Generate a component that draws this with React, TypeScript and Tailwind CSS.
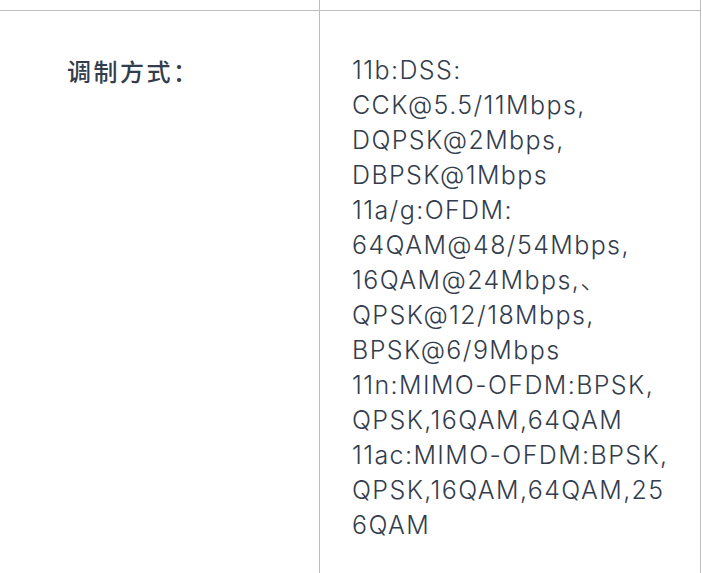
const lines = [
  "11b:DSS:",
  "CCK@5.5/11Mbps,",
  "DQPSK@2Mbps,",
  "DBPSK@1Mbps",
  "11a/g:OFDM:",
  "64QAM@48/54Mbps,",
  "16QAM@24Mbps,、",
  "QPSK@12/18Mbps,",
  "BPSK@6/9Mbps",
  "11n:MIMO-OFDM:BPSK,",
  "QPSK,16QAM,64QAM",
  "11ac:MIMO-OFDM:BPSK,",
  "QPSK,16QAM,64QAM,25",
  "6QAM",
];

const App: React.FC = () => {
  return (
    <div className="w-[702px] h-[573px] overflow-hidden bg-white font-['Inter','Noto_Sans_CJK_SC',sans-serif] text-[#333d4c]">
      <div className="w-[701px] border-r border-[#bdbdbd]">
        {/* previous row, cut off */}
        <div className="flex h-[10px]">
          <div className="w-[320px] border-r border-[#bdbdbd]" />
          <div className="flex-1" />
        </div>

        {/* modulation row */}
        <div className="flex border-t border-[#bdbdbd]">
          <div className="w-[320px] border-r border-[#bdbdbd] pl-[67px] pt-[42px] pb-[60px]">
            <span className="text-[24px] leading-[35px] font-medium tracking-[2.5px] font-['Noto_Sans_CJK_SC',sans-serif]">
              调制方式：
            </span>
          </div>
          <div className="flex-1 pl-[32px] pr-[10px] pt-[42px] pb-[60px] text-[25px] leading-[35px] font-light tracking-[1.4px]">
            {lines.map((l, i) => (
              <div key={i} className="whitespace-nowrap">{l}</div>
            ))}
          </div>
        </div>
      </div>
    </div>
  );
};

export default App;
